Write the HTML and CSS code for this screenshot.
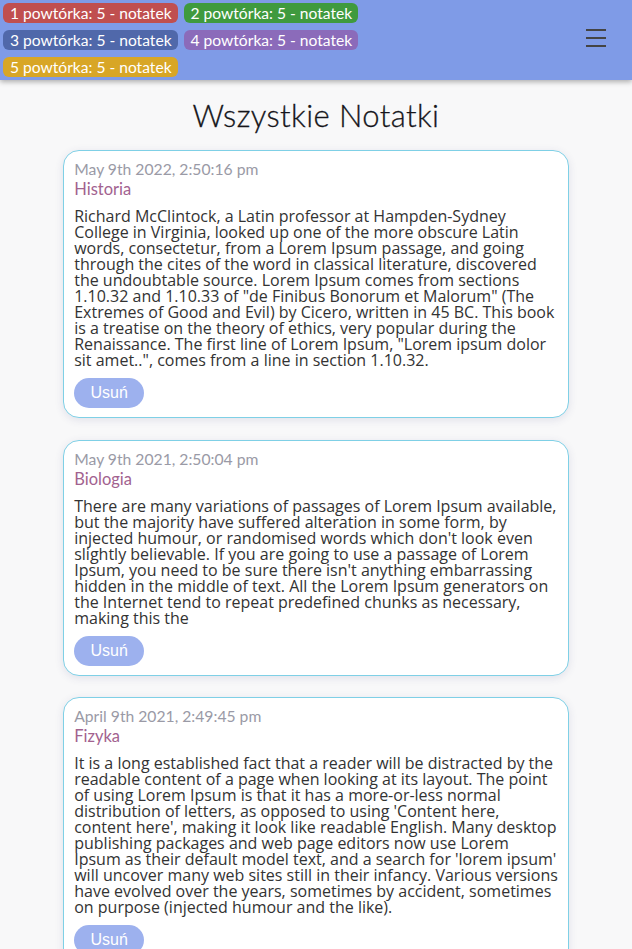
FILE: index.html
```html
<!DOCTYPE html>
<html lang="pl">
<head>
<meta charset="utf-8">
<title>Wszystkie Notatki</title>
<link rel="stylesheet" href="styles.css">
</head>
<body>
<header class="topbar">
  <div class="badges">
    <span class="badge b1">1 powtórka: 5 - notatek</span>
    <span class="badge b2">2 powtórka: 5 - notatek</span>
    <span class="badge b3">3 powtórka: 5 - notatek</span>
    <span class="badge b4">4 powtórka: 5 - notatek</span>
    <span class="badge b5">5 powtórka: 5 - notatek</span>
  </div>
  <button class="burger" aria-label="menu">
    <svg width="20" height="18" viewBox="0 0 20 18"><path d="M0 1h20M0 9h20M0 17h20" stroke="#444" stroke-width="2"/></svg>
  </button>
</header>
<main class="content">
  <h1 class="title">Wszystkie Notatki</h1>
  <article class="card">
    <div class="date">May 9th 2022, 2:50:16 pm</div>
    <div class="cat">Historia</div>
    <p class="text">Richard McClintock, a Latin professor at Hampden-Sydney College in Virginia, looked up one of the more obscure Latin words, consectetur, from a Lorem Ipsum passage, and going through the cites of the word in classical literature, discovered the undoubtable source. Lorem Ipsum comes from sections 1.10.32 and 1.10.33 of "de Finibus Bonorum et Malorum" (The Extremes of Good and Evil) by Cicero, written in 45 BC. This book is a treatise on the theory of ethics, very popular during the Renaissance. The first line of Lorem Ipsum, "Lorem ipsum dolor sit amet..", comes from a line in section 1.10.32.</p>
    <button class="del">Usuń</button>
  </article>
  <article class="card">
    <div class="date">May 9th 2021, 2:50:04 pm</div>
    <div class="cat">Biologia</div>
    <p class="text">There are many variations of passages of Lorem Ipsum available, but the majority have suffered alteration in some form, by injected humour, or randomised words which don't look even slightly believable. If you are going to use a passage of Lorem Ipsum, you need to be sure there isn't anything embarrassing hidden in the middle of text. All the Lorem Ipsum generators on the Internet tend to repeat predefined chunks as necessary, making this the</p>
    <button class="del">Usuń</button>
  </article>
  <article class="card">
    <div class="date">April 9th 2021, 2:49:45 pm</div>
    <div class="cat">Fizyka</div>
    <p class="text">It is a long established fact that a reader will be distracted by the readable content of a page when looking at its layout. The point of using Lorem Ipsum is that it has a more-or-less normal distribution of letters, as opposed to using 'Content here, content here', making it look like readable English. Many desktop publishing packages and web page editors now use Lorem Ipsum as their default model text, and a search for 'lorem ipsum' will uncover many web sites still in their infancy. Various versions have evolved over the years, sometimes by accident, sometimes on purpose (injected humour and the like).</p>
    <button class="del">Usuń</button>
  </article>
</main>
</body>
</html>
```
FILE: styles.css
```css
* { box-sizing: border-box; }
html, body { margin: 0; padding: 0; }
body {
  background: #f8f8f9;
  font-family: "Open Sans", sans-serif;
  color: #333;
}
.topbar {
  background: #7f9be7;
  height: 80px;
  display: flex;
  justify-content: space-between;
  align-items: center;
  padding: 0 26px 0 3px;
  box-shadow: 0 2px 5px rgba(0,0,0,0.3);
  position: relative;
  z-index: 1;
}
.badges {
  display: flex;
  flex-wrap: wrap;
  width: 370px;
  gap: 7px 6px;
  align-self: flex-start;
  padding-top: 3px;
}
.badge {
  font-family: Lato, sans-serif;
  font-size: 15.6px;
  line-height: 20px;
  height: 20px;
  color: #fff;
  padding: 0 6px 0 7px;
  border-radius: 6px;
  white-space: nowrap;
}
.b1 { background: #c04f4f; }
.b2 { background: #3f9a3e; }
.b3 { background: #5068aa; }
.b4 { background: #8b6bba; }
.b5 { background: #d8a626; }
.burger {
  background: none;
  border: 0;
  padding: 0;
  width: 20px;
  height: 18px;
  display: flex;
  margin-top: -4px;
}
.content {
  display: flex;
  flex-direction: column;
  align-items: center;
  padding-bottom: 20px;
}
.title {
  font-family: Lato, sans-serif;
  font-weight: 300;
  font-size: 31px;
  color: #15151a;
  margin: 18px 0 17px;
  line-height: 35px;
  letter-spacing: 0.4px;
  -webkit-text-stroke: 0.3px #15151a;
}
.card {
  width: 80%;
  background: #fff;
  border: 1px solid #7fd0e6;
  border-radius: 16px;
  padding: 8px 9px 9px 10px;
  margin-bottom: 21.5px;
  box-shadow: 0 2px 8px rgba(60,60,120,0.12);
}
.date {
  font-family: Lato, sans-serif;
  font-size: 15.7px;
  line-height: 20px;
  color: #9a9aa6;
}
.cat {
  font-family: Lato, sans-serif;
  font-size: 16.5px;
  line-height: 20px;
  color: #a2628f;
}
.text {
  margin: 9px 0 10px;
  font-size: 16px;
  line-height: 16px;
  color: #333;
}
.del {
  font-family: "Liberation Sans", Arial, sans-serif;
  font-size: 16px;
  color: #fff;
  background: #9db1ee;
  border: 0;
  border-radius: 15px;
  width: 70px;
  height: 30px;
  padding: 0;
  display: block;
}
```
